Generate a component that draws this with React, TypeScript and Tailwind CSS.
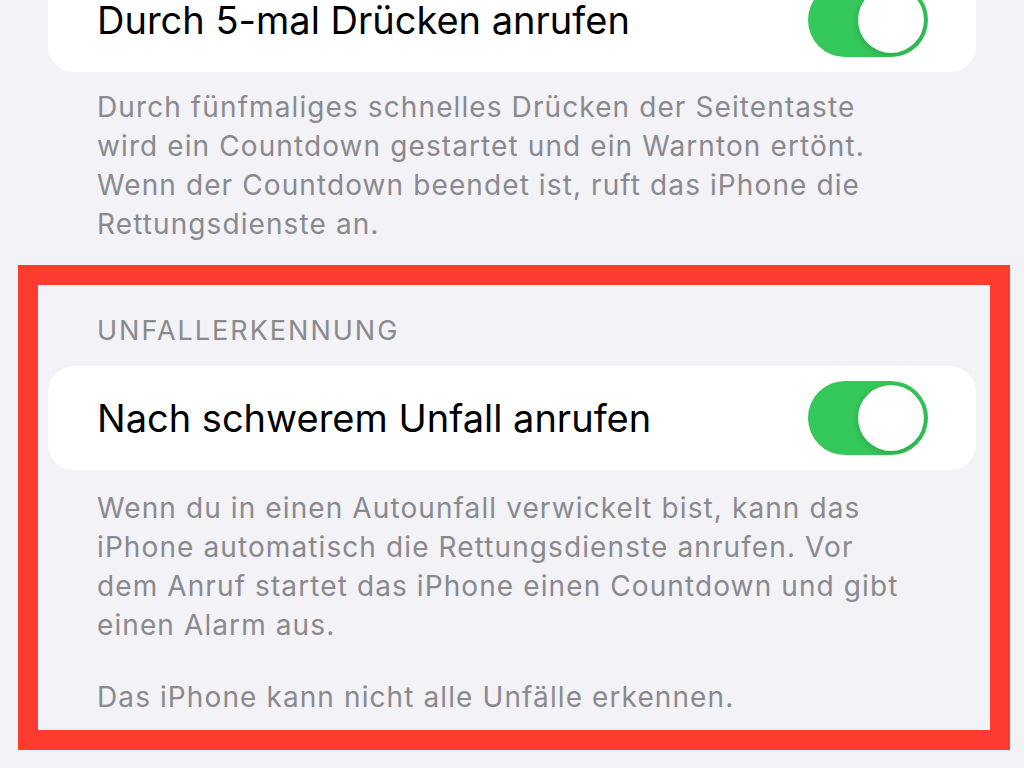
import React from "react";

function Toggle() {
  return (
    <div className="relative h-[74px] w-[120px] shrink-0 rounded-full bg-[#34c759]">
      <div className="absolute right-[4px] top-[4px] h-[66px] w-[66px] rounded-full bg-white shadow-[0_2px_6px_rgba(0,0,0,0.18)]" />
    </div>
  );
}

function Card({ title }: { title: string }) {
  return (
    <div className="flex h-[104px] items-center justify-between rounded-[26px] bg-white pl-[49px] pr-[48px]">
      <span className="text-[38px] leading-none text-black">{title}</span>
      <Toggle />
    </div>
  );
}

export default function App() {
  return (
    <div
      className="h-[768px] w-[1024px] overflow-hidden bg-[#f2f2f7]"
      style={{ fontFamily: "Inter, 'Noto Sans', sans-serif" }}
    >
      <div className="-mt-[32px] px-[48px]">
        <Card title="Durch 5-mal Drücken anrufen" />
        <p className="mt-[16px] whitespace-nowrap pl-[49px] text-[28px] leading-[39px] tracking-[1.1px] text-[#8a8a8e]">
          Durch fünfmaliges schnelles Drücken der Seitentaste
          <br />
          wird ein Countdown gestartet und ein Warnton ertönt.
          <br />
          Wenn der Countdown beendet ist, ruft das iPhone die
          <br />
          Rettungsdienste an.
        </p>
      </div>
      <div className="ml-[18px] mt-[21px] w-[992px] border-[20px] border-[#ff3b30] pb-[13px] pl-[10px] pr-[14px] pt-[28px]">
        <div className="pl-[49px] text-[27px] leading-[36px] tracking-[2px] text-[#8a8a8e]">
          UNFALLERKENNUNG
        </div>
        <div className="mt-[17px]">
          <Card title="Nach schwerem Unfall anrufen" />
        </div>
        <div className="mt-[19px] whitespace-nowrap pl-[49px] text-[28px] leading-[39px] tracking-[1.1px] text-[#8a8a8e]">
          <p>
            Wenn du in einen Autounfall verwickelt bist, kann das
            <br />
            iPhone automatisch die Rettungsdienste anrufen. Vor
            <br />
            dem Anruf startet das iPhone einen Countdown und gibt
            <br />
            einen Alarm aus.
          </p>
          <p className="mt-[33px]">Das iPhone kann nicht alle Unfälle erkennen.</p>
        </div>
      </div>
    </div>
  );
}
